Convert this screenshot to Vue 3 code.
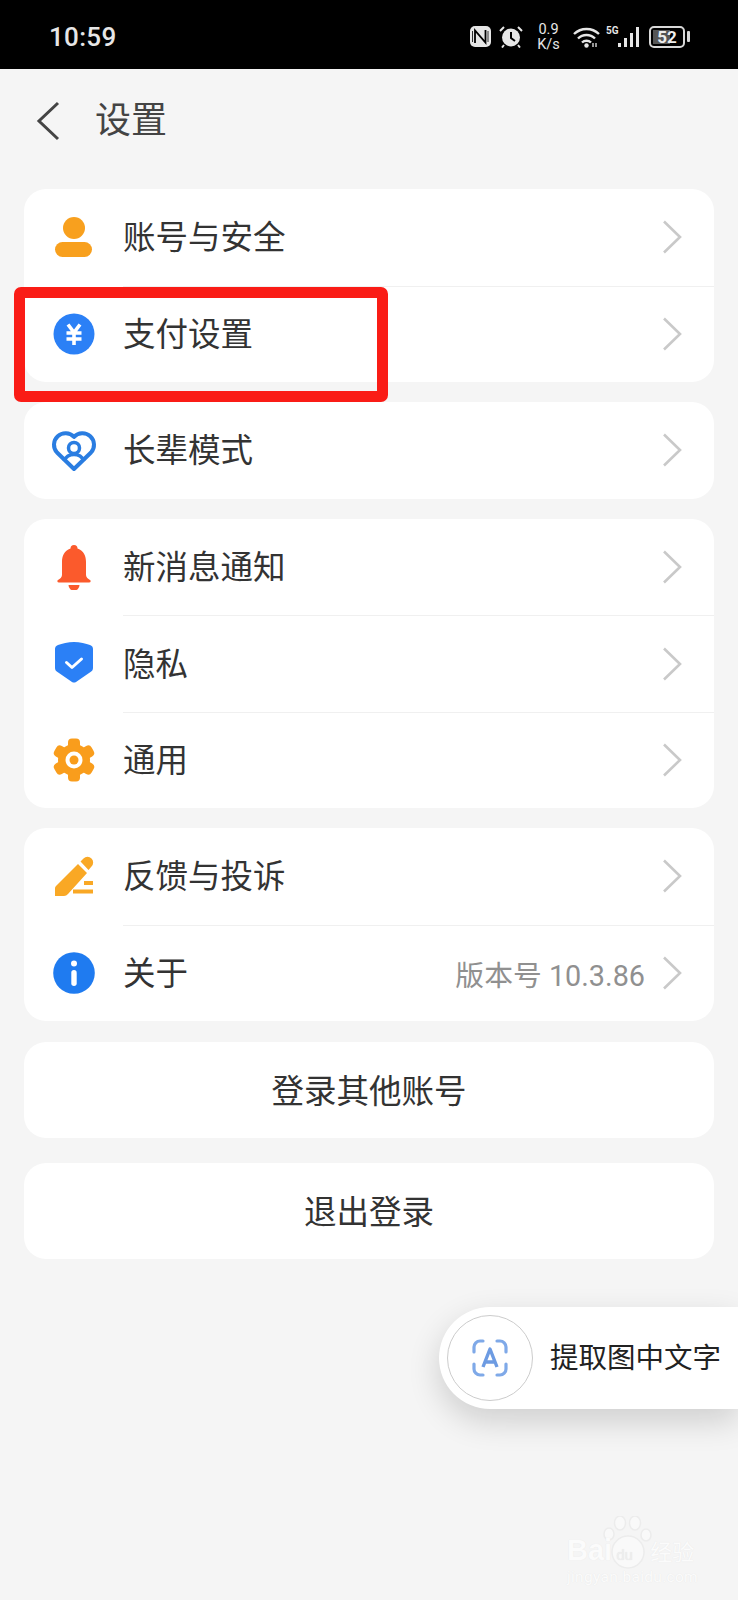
<script setup>
const groups = [
  [
    { icon: 'user', label: '账号与安全' },
    { icon: 'pay', label: '支付设置' },
  ],
  [{ icon: 'heart', label: '长辈模式' }],
  [
    { icon: 'bell', label: '新消息通知' },
    { icon: 'shield', label: '隐私' },
    { icon: 'gear', label: '通用' },
  ],
  [
    { icon: 'pen', label: '反馈与投诉' },
    { icon: 'info', label: '关于', extra: '版本号 10.3.86' },
  ],
];

const gearTeeth = [0, 60, 120, 180, 240, 300];
</script>

<template>
  <div class="page">
    <div class="status">
      <span class="time">10:59</span>
      <div class="status-icons">
        <svg class="nfc" width="21" height="21" viewBox="0 0 21 21">
          <rect width="21" height="21" rx="5" fill="#e6e6e6" />
          <path d="M5 17V4.500L15.500 16.500V4" fill="none" stroke="#000" stroke-width="1.800" />
          <path d="M2.500 5v11M18 5v11" stroke="#000" stroke-width="0.800" />
        </svg>
        <svg class="alarm" width="24" height="23" viewBox="0 0 24 23">
          <circle cx="12" cy="12.500" r="9" fill="#e6e6e6" />
          <path d="M12 7v6l4 3" fill="none" stroke="#000" stroke-width="2" />
          <path d="M1 6l4-4M23 6l-4-4M5 20l-2 2.500M19 20l2 2.500" stroke="#e6e6e6" stroke-width="2" />
        </svg>
        <div class="speed"><span>0.9</span><span>K/s</span></div>
        <svg class="wifi" width="27" height="22" viewBox="0 0 27 22">
          <g fill="none" stroke="#e6e6e6" stroke-width="2.400">
            <path d="M1 8a18 18 0 0 1 25 0" />
            <path d="M5 12.500a12 12 0 0 1 17 0" />
            <path d="M9 16.500a6.500 6.500 0 0 1 9 0" />
          </g>
          <circle cx="13.500" cy="19.500" r="2.200" fill="#e6e6e6" />
          <path d="M20 17v4M23 17v4" stroke="#bbb" stroke-width="1.600" />
        </svg>
        <div class="signal-wrap">
          <span class="five-g">5G</span>
          <svg width="24" height="22" viewBox="0 0 24 22">
            <rect x="1" y="17" width="3" height="4" fill="#e6e6e6" />
            <rect x="7" y="12" width="3" height="9" fill="#e6e6e6" />
            <rect x="13" y="7" width="3" height="14" fill="#e6e6e6" />
            <rect x="19" y="1" width="3" height="20" fill="#e6e6e6" />
          </svg>
        </div>
        <div class="battery">
          <div class="battery-body">
            <div class="battery-fill"></div>
            <span class="battery-num">52</span>
          </div>
          <div class="battery-tip"></div>
        </div>
      </div>
    </div>

    <header class="header">
      <svg width="26" height="40" viewBox="0 0 26 40">
        <path d="M23 2L4 20l19 18" fill="none" stroke="#444" stroke-width="3" />
      </svg>
      <span class="title">设置</span>
    </header>

    <main class="list">
      <section v-for="(group, i) in groups" :key="i" class="card">
        <div v-for="row in group" :key="row.label" class="row">
          <div class="icon">
            <svg width="46" height="46" viewBox="0 0 46 46">
              <g v-if="row.icon === 'user'" fill="#f8a01e">
                <circle cx="23" cy="14" r="11" />
                <rect x="4" y="28" width="37" height="15" rx="7.500" />
              </g>
              <g v-else-if="row.icon === 'pay'">
                <circle cx="23" cy="23" r="20.500" fill="#2b80f6" />
                <path d="M17 13.500l6 8 6-8M15.500 22h15M15.500 28h15M23 22v12" fill="none" stroke="#fff" stroke-width="3.600" />
              </g>
              <g v-else-if="row.icon === 'heart'" fill="none" stroke="#2a7de1" stroke-width="4" stroke-linejoin="round">
                <path d="M23 42L6 25.500A11.500 11.500 0 0 1 23 10A11.500 11.500 0 0 1 40 25.500Z" />
                <circle cx="23" cy="21" r="5.500" stroke-width="3.500" />
                <path d="M13 34a11 11 0 0 1 20 0" stroke-width="3.500" />
              </g>
              <g v-else-if="row.icon === 'bell'" fill="#fb5a2c">
                <path d="M23 1a3.500 3.500 0 0 1 3.500 3.500C33 7 35 12 35 18v13c0 2 2 4 4 5 1 .5 1 2.500-1 2.500H8c-2 0-2-2-1-2.500 2-1 4-3 4-5V18c0-6 2-11 8.500-13.500A3.500 3.500 0 0 1 23 1z" />
                <path d="M17.500 41h11a5.500 5.500 0 0 1-11 0z" />
              </g>
              <g v-else-if="row.icon === 'shield'">
                <path d="M23 2c6 0 12 1.500 16 3 2 .8 3 2 3 4v19c0 2-1 3-2.500 4L25 42c-1.300.8-2.700.8-4 0L6.500 32C5 31 4 30 4 28V9c0-2 1-3.200 3-4 4-1.500 10-3 16-3z" fill="#2b80f6" />
                <path d="M15.500 22.500l5.500 5 9.500-8.500" fill="none" stroke="#fff" stroke-width="3" stroke-linecap="round" stroke-linejoin="round" />
              </g>
              <g v-else-if="row.icon === 'gear'">
                <g fill="#f99d1c">
                  <circle cx="23" cy="23" r="16" />
                  <rect
                    v-for="deg in gearTeeth"
                    :key="deg"
                    x="17"
                    y="1.500"
                    width="12"
                    height="12"
                    rx="4"
                    :transform="`rotate(${deg} 23 23)`"
                  />
                </g>
                <circle cx="23" cy="23" r="8.500" fill="#fff" />
                <circle cx="23" cy="23" r="4.500" fill="#f99d1c" />
              </g>
              <g v-else-if="row.icon === 'pen'" fill="#f9a825">
                <path d="M4 43v-8a3 3 0 0 1 1-2L27 11l9 9-19 21a6 6 0 0 1-4 2z" />
                <path d="M29.500 8.500l3-3a5.500 5.500 0 0 1 8 8l-3 3.500z" />
                <rect x="22" y="36.500" width="20" height="4" />
                <rect x="33" y="28" width="9" height="4" />
              </g>
              <g v-else-if="row.icon === 'info'">
                <circle cx="23" cy="23" r="20.800" fill="#1f7bf0" />
                <circle cx="23" cy="13.500" r="3" fill="#fff" />
                <rect x="20.300" y="20" width="5.400" height="16" rx="2.700" fill="#fff" />
              </g>
            </svg>
          </div>
          <div class="row-body">
            <span class="label">{{ row.label }}</span>
            <span v-if="row.extra" class="extra">{{ row.extra }}</span>
            <svg class="chevron" width="20" height="34" viewBox="0 0 20 34">
              <path d="M2 1.500L18 17 2 32.500" fill="none" stroke="#c9c9c9" stroke-width="2.600" />
            </svg>
          </div>
        </div>
      </section>
      <button class="card action first">登录其他账号</button>
      <button class="card action">退出登录</button>
    </main>

    <div class="highlight"></div>

    <div class="extract">
      <div class="extract-circle">
        <svg width="38" height="38" viewBox="0 0 38 38" fill="none">
          <path d="M3 13V8a6 6 0 0 1 6-6h3M26 2h3a6 6 0 0 1 6 6v5M35 25v5a6 6 0 0 1-6 6h-3M12 36H9a6 6 0 0 1-6-6v-5" stroke="#7fa9e8" stroke-width="3.200" stroke-linecap="round" />
          <path d="M12 28l7-18 7 18M14.500 23h9" stroke="#6d9be2" stroke-width="3.400" stroke-linejoin="round" />
        </svg>
      </div>
      <span class="extract-text">提取图中文字</span>
    </div>

    <div class="watermark">
      <svg class="paw" width="52" height="54" viewBox="0 0 52 54">
        <g fill="#f9f9f9" stroke="#ececec" stroke-width="1.500">
          <ellipse cx="7" cy="18" rx="5" ry="6" />
          <ellipse cx="18" cy="7" rx="5.500" ry="7" />
          <ellipse cx="33" cy="7" rx="5.500" ry="7" />
          <ellipse cx="44" cy="19" rx="5" ry="6" />
          <circle cx="26" cy="36" r="16" />
        </g>
      </svg>
      <div class="wm-top"><span class="wm-bai">Bai</span><span class="wm-du">du</span><span class="wm-cn">经验</span></div>
      <div class="wm-url">jingyan.baidu.com</div>
    </div>
  </div>
</template>

<style>
html,
body {
  margin: 0;
  background: #f5f5f5;
}
</style>

<style scoped>
.page {
  position: relative;
  width: 738px;
  height: 1600px;
  overflow: hidden;
  background: #f5f5f5;
  font-family: Roboto, "Noto Sans CJK SC", sans-serif;
  color: #333;
}
.status {
  height: 69px;
  box-sizing: border-box;
  background: #000;
  color: #e6e6e6;
  display: flex;
  align-items: center;
  justify-content: space-between;
  padding: 4px 49px 0 49px;
}
.time {
  font-size: 26px;
  font-weight: 500;
  letter-spacing: 0.3px;
}
.status-icons {
  display: flex;
  align-items: center;
  margin-right: -1px;
}
.nfc {
  margin-right: 1px;
}
.alarm {
  margin-left: 7px;
}
.speed {
  margin-left: 13px;
  width: 25px;
  display: flex;
  flex-direction: column;
  align-items: center;
  font-size: 14.500px;
  line-height: 15px;
}
.speed span {
  display: block;
  height: 15px;
}
.wifi {
  margin-left: 12px;
}
.signal-wrap {
  position: relative;
  margin-left: 17px;
}
.signal-wrap svg {
  display: block;
}
.five-g {
  position: absolute;
  left: -11px;
  top: -1px;
  font-size: 10px;
  line-height: 11px;
  font-weight: 700;
}
.battery {
  margin-left: 8px;
  display: flex;
  align-items: center;
  gap: 2px;
}
.battery-body {
  position: relative;
  width: 36px;
  height: 22px;
  box-sizing: border-box;
  border: 2px solid #d8d8d8;
  border-radius: 5px;
  display: flex;
  align-items: center;
  justify-content: center;
}
.battery-fill {
  position: absolute;
  left: 2px;
  top: 2px;
  bottom: 2px;
  width: 17px;
  background: #555;
}
.battery-num {
  position: relative;
  font-size: 17px;
  font-weight: 700;
  color: #eee;
}
.battery-tip {
  width: 3px;
  height: 11px;
  border-radius: 1px;
  background: #d8d8d8;
}
.header {
  height: 120px;
  box-sizing: border-box;
  display: flex;
  align-items: center;
  gap: 34px;
  padding-left: 35px;
  padding-bottom: 16px;
  color: #444;
}
.title {
  font-size: 36px;
  color: #444;
  line-height: 1;
}
.list {
  margin: 0 24px;
  display: flex;
  flex-direction: column;
  gap: 20px;
}
.card {
  display: block;
  width: 100%;
  box-sizing: border-box;
  background: #fff;
  border: 0;
  border-radius: 22px;
}
.row {
  height: 96.500px;
  display: flex;
  align-items: stretch;
}
.icon {
  width: 99px;
  flex: none;
  box-sizing: border-box;
  padding-left: 27px;
  display: flex;
  align-items: center;
}
.icon svg {
  display: block;
}
.row-body {
  flex: 1;
  display: flex;
  align-items: center;
  padding-right: 32px;
  min-width: 0;
}
.row + .row .row-body {
  border-top: 1px solid #f0f0f0;
}
.label {
  flex: 1;
  font-size: 32.500px;
  line-height: 1;
  padding-top: 2px;
}
.extra {
  font-size: 28.800px;
  color: #909090;
  margin-right: 17px;
}
.chevron {
  display: block;
  flex: none;
}
.action {
  height: 96px;
  padding: 0 0 3px;
  font-family: inherit;
  font-size: 32.500px;
  color: #333;
  text-align: center;
}
.action.first {
  margin-top: 1px;
}
.action + .action {
  margin-top: 5px;
}
.highlight {
  position: absolute;
  left: 14px;
  top: 287px;
  width: 374px;
  height: 115px;
  box-sizing: border-box;
  border: 11px solid #fa1c16;
  border-radius: 7px;
}
.extract {
  position: absolute;
  left: 439px;
  top: 1307px;
  width: 299px;
  height: 102px;
  box-sizing: border-box;
  background: #fff;
  border-radius: 51px 0 0 51px;
  box-shadow: 0 12px 32px rgba(0, 0, 0, 0.16);
  display: flex;
  align-items: center;
  padding-left: 8px;
  gap: 17px;
  font-size: 28.500px;
  color: #222;
  white-space: nowrap;
}
.extract-text {
  padding-bottom: 5px;
}
.extract-circle {
  width: 86px;
  height: 86px;
  flex: none;
  box-sizing: border-box;
  border: 1.500px solid #ccc;
  border-radius: 50%;
  display: flex;
  align-items: center;
  justify-content: center;
}
.watermark {
  position: absolute;
  left: 567px;
  top: 1518px;
  width: 140px;
  height: 70px;
  color: #fbfbfb;
  text-shadow: 0 0 1px #e4e4e4;
}
.paw {
  position: absolute;
  left: 35px;
  top: -2px;
}
.wm-top {
  position: absolute;
  left: 0;
  top: 16px;
  display: flex;
  align-items: baseline;
  white-space: nowrap;
}
.wm-bai {
  font-size: 29px;
  font-weight: 700;
  font-family: "Liberation Sans", sans-serif;
}
.wm-du {
  font-size: 15px;
  margin-left: 4px;
  width: 30px;
  color: #eee;
}
.wm-cn {
  font-size: 22px;
  margin-left: 4px;
}
.wm-url {
  position: absolute;
  left: 0;
  top: 50px;
  font-size: 15.500px;
  letter-spacing: 0.3px;
  white-space: nowrap;
}
</style>
